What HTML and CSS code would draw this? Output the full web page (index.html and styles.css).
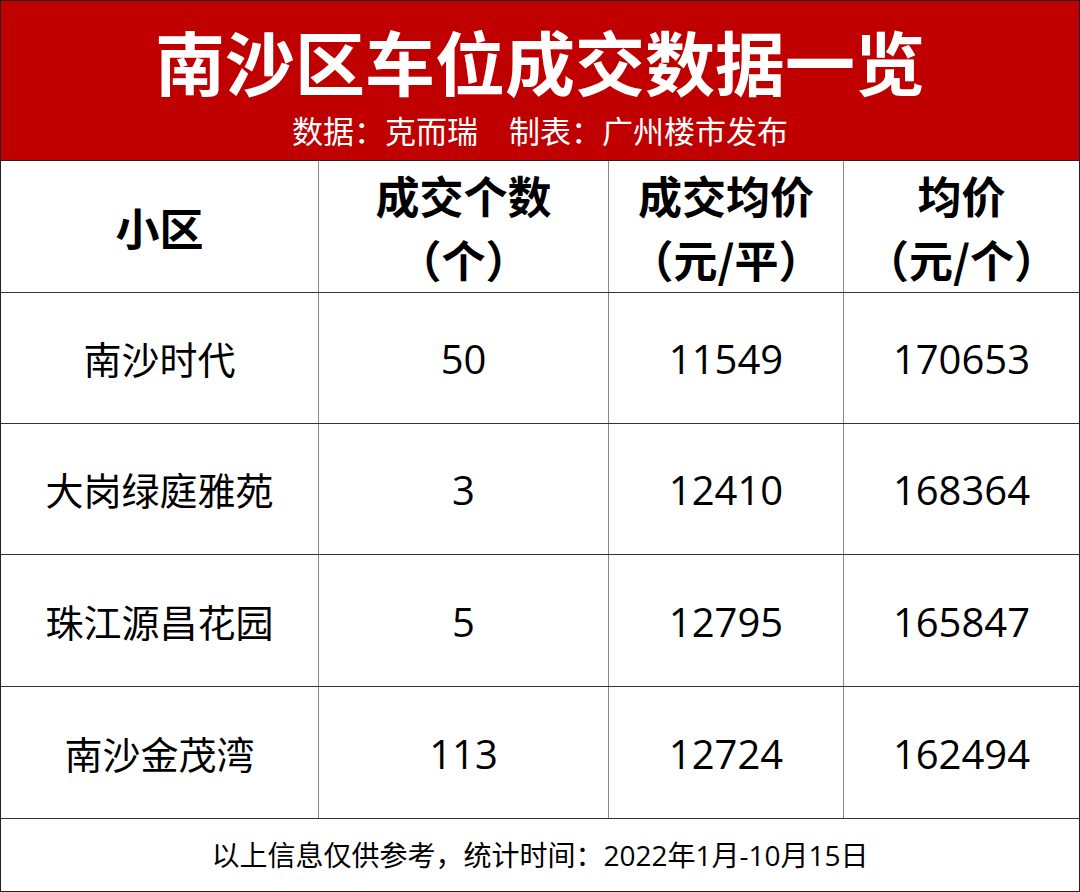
FILE: index.html
```html
<!DOCTYPE html>
<html lang="zh-CN">
<head>
<meta charset="utf-8">
<title>南沙区车位成交数据一览</title>
<link rel="stylesheet" href="styles.css">
</head>
<body>
<div class="sheet">
  <header class="banner">
    <h1 class="title">南沙区车位成交数据一览</h1>
    <p class="subtitle">数据：克而瑞　制表：广州楼市发布</p>
  </header>
  <div class="table">
    <div class="row head">
      <div class="cell">小区</div>
      <div class="cell">成交个数<br>（个）</div>
      <div class="cell">成交均价<br>（元/平）</div>
      <div class="cell">均价<br>（元/个）</div>
    </div>
    <div class="row">
      <div class="cell name">南沙时代</div>
      <div class="cell num">50</div>
      <div class="cell num">11549</div>
      <div class="cell num">170653</div>
    </div>
    <div class="row">
      <div class="cell name">大岗绿庭雅苑</div>
      <div class="cell num">3</div>
      <div class="cell num">12410</div>
      <div class="cell num">168364</div>
    </div>
    <div class="row">
      <div class="cell name">珠江源昌花园</div>
      <div class="cell num">5</div>
      <div class="cell num">12795</div>
      <div class="cell num">165847</div>
    </div>
    <div class="row">
      <div class="cell name">南沙金茂湾</div>
      <div class="cell num">113</div>
      <div class="cell num">12724</div>
      <div class="cell num">162494</div>
    </div>
    <div class="footer">以上信息仅供参考，统计时间：2022年1月-10月15日</div>
  </div>
</div>
</body>
</html>
```

FILE: styles.css
```css
* { box-sizing: border-box; }
html, body { margin: 0; padding: 0; background: #fff; }
body {
  font-family: "Noto Sans CJK SC", "Noto Sans", sans-serif;
  color: #000;
}
.sheet {
  width: 1080px;
  height: 892px;
  border: 1px solid #222;
  display: flex;
  flex-direction: column;
}
.banner {
  height: 160px;
  background: #c00000;
  border-bottom: 1px solid #222;
  color: #fff;
  text-align: center;
  padding-top: 25px;
}
.title {
  margin: 0;
  font-size: 70px;
  line-height: 70px;
  font-weight: 700;
}
.subtitle {
  margin: 18px 0 0;
  font-size: 31px;
  line-height: 32px;
  font-weight: 400;
}
.table {
  flex: 1;
  display: flex;
  flex-direction: column;
}
.row {
  display: grid;
  grid-template-columns: 318px 290px 235px 1fr;
  height: 132px;
  border-bottom: 1px solid #333;
}
.row:nth-child(2), .row:nth-child(3) { height: 131px; }
.cell {
  border-right: 1px solid #888;
  display: flex;
  align-items: center;
  justify-content: center;
  text-align: center;
}
.cell:last-child { border-right: none; }
.head .cell {
  font-size: 44px;
  line-height: 64px;
  font-weight: 700;
}
.name {
  font-size: 38px;
  line-height: 48px;
}
.num {
  font-family: "Open Sans", "Noto Sans CJK SC", sans-serif;
  font-size: 40px;
  line-height: 48px;
  padding-top: 2px;
}
.footer {
  flex: 1;
  display: flex;
  align-items: center;
  justify-content: center;
  font-family: "Open Sans", "Noto Sans CJK SC", sans-serif;
  font-size: 28px;
  line-height: 32px;
}
```
